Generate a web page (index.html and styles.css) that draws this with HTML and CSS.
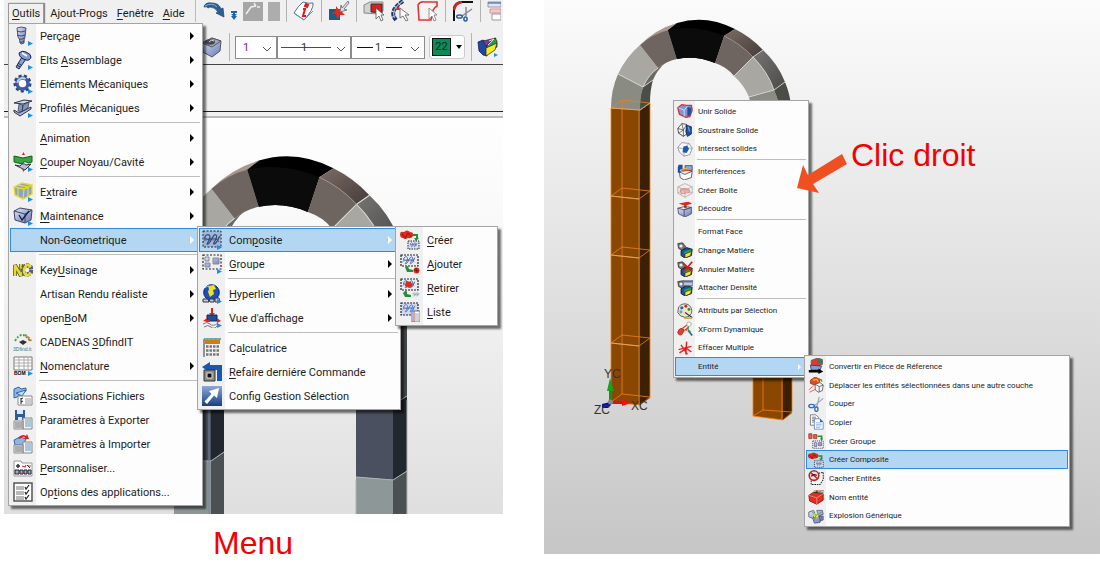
FILE: index.html
```html
<!DOCTYPE html>
<html lang="fr">
<head>
<meta charset="utf-8">
<title>Composite - Menu / Clic droit</title>
<link rel="stylesheet" href="styles.css">
</head>
<body>
<svg class="defs" aria-hidden="true">
<defs>
<linearGradient id="steel" x1="0" y1="0" x2="1" y2="1"><stop offset="0" stop-color="#dfe6f7"/><stop offset="1" stop-color="#6478b4"/></linearGradient>
<linearGradient id="navy" x1="0" y1="0" x2="0" y2="1"><stop offset="0" stop-color="#8ea8d8"/><stop offset="1" stop-color="#173f80"/></linearGradient>
<linearGradient id="brown" x1="0" y1="0" x2="1" y2="1"><stop offset="0" stop-color="#7c6c66"/><stop offset="1" stop-color="#443b39"/></linearGradient>
<linearGradient id="grey" x1="0" y1="0" x2="1" y2="1"><stop offset="0" stop-color="#777573"/><stop offset="1" stop-color="#4c4a48"/></linearGradient>

<symbol id="arch" viewBox="600 0 200 120" overflow="visible">
<path d="M640 45Q656 29 677 23L668 30Q652 36 640 45Z" fill="#a8988f"/>
<path d="M640 110Q639 98 643 87L653 80Q650 90 650 103Z" fill="#4b4e47"/>
<path d="M643 87Q648 75 658 68L666 62Q657 70 653 80Z" fill="#6c6a66"/>
<path d="M611 108Q611 90 618 74L643 87Q640 97 640 110Z" fill="#8a8c82"/>
<path d="M618 74Q626 57 640 45L658 68Q648 76 643 87Z" fill="#a9a7a1"/>
<path d="M640 45Q653 34 668 30L677 59Q667 61 658 68Z" fill="#6f6560"/>
<path d="M668 30L677 23Q706 14 735 29L724 36L715 63Q696 55 677 59Z" fill="#000"/>
<path d="M668 30Q696 24 724 36L715 63Q696 55 677 59Z" fill="#0b0b0b"/>
<path d="M724 36Q741 44 753 57L734 76Q727 67 715 63Z" fill="#6f6560"/>
<path d="M724 36L735 29Q751 37 763 50L753 57Q741 44 724 36Z" fill="url(#brown)"/>
<path d="M753 57Q768 72 774 90L749 97Q744 85 734 76Z" fill="#a9a7a1"/>
<path d="M753 57L763 50Q778 64 785 82L774 90Q768 72 753 57Z" fill="url(#grey)"/>
<path d="M774 90Q779 101 780 112L751 112Q751 104 749 97Z" fill="#8a8c82"/>
<path d="M774 90L785 82Q790 94 791 106L780 112Q779 101 774 90Z" fill="#4a4d45"/>
<path d="M618 74L643 87L653 80M643 87Q648 75 658 68M753 57L763 50M753 57Q768 72 774 90L785 82M749 97L774 90M734 76L753 57" fill="none" stroke="#dddbd6" stroke-width=".8"/>
<path d="M724 36Q741 44 753 57" fill="none" stroke="#a08f86" stroke-width=".7"/>
</symbol>

<symbol id="go" viewBox="0 0 20 20"><path d="M15 15v5l5-2.500z" fill="#1b8fe0"/></symbol>
<symbol id="knot" viewBox="0 0 20 20"><path d="M3 9C2 3 8 2 8 6S3 14 6 13s5-11 8-9-4 9-2 9 6-7 5-8" fill="none" stroke="currentColor" stroke-width="1.200"/><path d="M1 11C5 5 15 13 18 5M2 6c4 6 10-4 15 5" fill="none" stroke="currentColor" stroke-width=".8"/></symbol>

<symbol id="i-drill" viewBox="0 0 20 20"><path d="M4 2q4-2 9 0l-1 9q-1 2-1 6-3 2-4 0 0-4-2-6z" fill="url(#steel)" stroke="#334" stroke-width=".8"/><path d="M4 5q4 2 8 0M4 9q4 2 8 0M6 13q3 1 5-1M7 16q2 1 4-1" fill="none" stroke="#28304e" stroke-width=".8"/><use href="#go"/></symbol>
<symbol id="i-bolt" viewBox="0 0 20 20"><path d="M9 7L3 17l3 2L13 9z" fill="#8aa0d0" stroke="#1d2b55"/><path d="M5 13l3 2M4 15l3 2" stroke="#1d2b55"/><path d="M6 3q3-3 7-1 5 2 5 5-1 4-5 3Q6 8 6 3z" fill="#7f9ad2" stroke="#14224c"/><path d="M9 3l5 3" stroke="#fff" stroke-width="1.500"/><use href="#go"/></symbol>
<symbol id="i-gear" viewBox="0 0 20 20"><circle cx="9.500" cy="9.500" r="7.500" fill="none" stroke="#2f4270" stroke-width="3" stroke-dasharray="3 2.200"/><circle cx="9.500" cy="9.500" r="5.500" fill="#fff" stroke="#3c5ca0" stroke-width="3.500"/><path d="M4.500 9a5 5 0 0 1 8-4" fill="none" stroke="#bccbea" stroke-width="2"/><use href="#go"/></symbol>
<symbol id="i-beam" viewBox="0 0 20 20"><path d="M1 5L11 2l8 1-9 3z" fill="#cbd6ef" stroke="#334"/><path d="M6 6l4 1-1 7-4-1zM10 7l6-3-1 6-6 4z" fill="#7f95c8" stroke="#334" stroke-width=".7"/><path d="M1 12l5 3 12-6v2L7 18l-6-4z" fill="#a4b4dc" stroke="#334"/><use href="#go"/></symbol>
<symbol id="i-cavity" viewBox="0 0 20 20"><path d="M1 4l9 2 9-2v6l-4 1q-4-3-6 1L1 10z" fill="#35a73f" stroke="#155c1c"/><path d="M2 13l5 1q3-4 6-1l5-1-6 6z" fill="#b7c0d8" stroke="#334"/><path d="M9 3l1.500-3L12 3zM9 17l1.500 3L12 17z" fill="#d22"/><use href="#go"/></symbol>
<symbol id="i-extract" viewBox="0 0 20 20"><path d="M1 5l8-4 10 2v9l-9 5-8-4z" fill="#8ba0d4"/><path d="M1 5l8-4 10 2-8 4zM11 7l-1 10 9-5V3M1 5l1 8 8 4M5 6v8M5 3l10 2v9" fill="none" stroke="#e8dc20" stroke-width="1.300"/><use href="#go"/></symbol>
<symbol id="i-maint" viewBox="0 0 20 20"><path d="M1 5l6-3 12 2-1 10-6 3-10-3z" fill="url(#steel)" stroke="#446"/><path d="M1 5l11 3 7-4M12 8v9" fill="none" stroke="#446"/><path d="M6 9l3 5 7-9" fill="none" stroke="#102040" stroke-width="1.300"/><use href="#go"/></symbol>
<symbol id="i-nc" viewBox="0 0 20 20"><path d="M2 16V5l6 11V4" fill="none" stroke="#555" stroke-width="4"/><path d="M2 16V5l6 11V4" fill="none" stroke="#e9dc24" stroke-width="2.500"/><circle cx="14" cy="10" r="4.500" fill="none" stroke="#55607c" stroke-width="4.500" stroke-dasharray="3 1"/><path d="M18 7q-4-4-6 0t0 7 6-1" fill="none" stroke="#e9dc24" stroke-width="2.500"/></symbol>
<symbol id="i-cadenas" viewBox="0 0 20 20"><path d="M2 9q7-12 15 0" fill="none" stroke="#3aa85a" stroke-width="2" stroke-dasharray="2 1.500"/><path d="M12 3q4 2 6 6" fill="none" stroke="#e0701d" stroke-width="2" stroke-dasharray="2 1.500"/><path d="M6 10l4-2 4 2-4 3z" fill="#333"/><text x="0" y="18.500" class="tiny teal">3Dfind.it</text></symbol>
<symbol id="i-bom" viewBox="0 0 20 20"><path d="M1 1h18v13H1z" fill="#fff" stroke="#777"/><path d="M1 4h18M1 7h18M1 10h18M6 1v13M11 1v13M15 1v13" stroke="#aaa"/><text x="1" y="19" class="tiny heavy">BOM</text><use href="#go"/></symbol>
<symbol id="i-assoc" viewBox="0 0 20 20"><path d="M1 3l5-2 2 2 5-1v3l-9 6-3 1z" fill="#8fb5e2" stroke="#3468a8"/><path d="M3 7l10-3-4 6z" fill="#c7def5" stroke="#3468a8"/><path d="M5 10h14v9H5z" fill="#fff" stroke="#888"/><path d="M8 12v6M8 13l2-1M8 16l2-1" stroke="#222"/><path d="M12 13h6M12 15h6M12 17h6" stroke="#999"/></symbol>
<symbol id="i-export" viewBox="0 0 20 20"><path d="M2 0h10v10H2z" fill="#2b5a9e"/><path d="M4 0h6v4H4zM5 7h4v3H5z" fill="#dce8f6"/><path d="M1 11h9v8H1zM10 8h9v11h-9z" fill="#f4f4f4" stroke="#888"/><path d="M2 13h7M2 15h7M2 17h7" stroke="#666"/><path d="M12 10h6M12 12h6M12 14h6M12 16h6" stroke="#69b"/></symbol>
<symbol id="i-import" viewBox="0 0 20 20"><path d="M1 6l6-3 6 2-3 6H2z" fill="#8fb5e2" stroke="#3468a8"/><path d="M5 4q4-5 8-2l1-2 2 5-5 0 1-2q-3-1-5 2z" fill="#d22"/><path d="M1 11h9v8H1zM10 8h9v11h-9z" fill="#f4f4f4" stroke="#888"/><path d="M2 13h7M2 15h7M2 17h7" stroke="#666"/><path d="M12 10h6M12 12h6M12 14h6M12 16h6" stroke="#69b"/></symbol>
<symbol id="i-custom" viewBox="0 0 20 20"><path d="M1 3h7l1 2h10v13H1z" fill="#fff" stroke="#999"/><path d="M3 8h4M5 6v4" stroke="#334" stroke-width="1.500"/><path d="M9 8l3 1 1-2M15 8h3" stroke="#e33" stroke-width="1.200" fill="none"/><path d="M14 7l3 3" stroke="#223"/><path d="M2 12h4v4H2zM7 12h3v4H7zM11 12h3v4h-3zM15 12h3v4h-3z" fill="#aab" stroke="#223"/></symbol>
<symbol id="i-options" viewBox="0 0 20 20"><path d="M1 1h18v18H1z" fill="#fdfdfd" stroke="#555" stroke-width="1.500"/><path d="M3 5h8M3 7h8M3 10h8M3 12h8M3 15h8M3 17h8" stroke="#777"/><path d="M12 5l1 2 3-4M12 10l1 2 3-4M12 15l1 2 3-4" fill="none" stroke="#222" stroke-width="1.200"/></symbol>

<symbol id="i-composite" viewBox="0 0 20 20"><path d="M1 1h18v16H1z" fill="#9fb6d6" stroke="#223" stroke-dasharray="2 1.500"/><g color="#33497a"><use href="#knot" y="1"/></g><use href="#go"/></symbol>
<symbol id="i-group" viewBox="0 0 20 20"><path d="M1 1h18v14H1z" fill="none" stroke="#222" stroke-width="1.200" stroke-dasharray="2 1.500"/><path d="M3 3h4v4H3zM3 9h5v4H3zM11 4h6v6h-6z" fill="url(#steel)" stroke="#889"/><use href="#go"/></symbol>
<symbol id="i-globe" viewBox="0 0 20 20"><circle cx="9.500" cy="8.500" r="7.800" fill="#1b4fc0" stroke="#0a2360"/><path d="M6 2l6-1 2 4-3 1 1 4-4 3-2-5 1-3z" fill="#f2e020"/><path d="M3 4q2-2 4-2" stroke="#9cc4ff" fill="none"/><path d="M1 15h5l1 3H1zM7 15h5v3H8zM13 14h4l1 4h-5z" fill="#c8ccd8" stroke="#334"/><use href="#go"/></symbol>
<symbol id="i-view" viewBox="0 0 20 20"><path d="M9 0h2v5h2l-3 3-3-3h2z" fill="#d22"/><path d="M5 7h10v6H5z" fill="#1c4f9c" stroke="#0d2a60"/><path d="M1 13l4-3v2h3v2H5zM19 13l-4-3v5z" fill="#e2241c"/><path d="M1 16q4-3 7 0t8-1M2 19q4-3 7 0t6-1" fill="none" stroke="#777"/><use href="#go"/></symbol>
<symbol id="i-calc" viewBox="0 0 20 20"><path d="M1 1h18v18H1z" fill="#f2f2f2"/><path d="M2 19V1h17" stroke="#333" fill="none"/><path d="M3 2h15v4H3z" fill="#d77a12"/><path d="M2 1h17" stroke="#3fd0d8" stroke-dasharray="3 1"/><path d="M4 8.500h14M4 12.500h14M4 16.500h14" stroke="#777" stroke-width="2.500" stroke-dasharray="2.500 1"/></symbol>
<symbol id="i-redo" viewBox="0 0 20 20"><path d="M0 5l8-5v3h12v16h-5V8H8v3z" fill="#1858b0"/><path d="M2 8h11v11H2z" fill="#8c8c8c" stroke="#333"/><path d="M5 11h5v5H5z" fill="#111" stroke="#ddd"/></symbol>
<symbol id="i-cursor" viewBox="0 0 20 20"><path d="M0 0h20v20H0z" fill="url(#navy)"/><path d="M17 2l-2 10-3-2.500L5 18l-2.500-2.500L9.500 8 7 5z" fill="#fff"/></symbol>

<symbol id="i-ccreate" viewBox="0 0 20 20"><path d="M0 4q0-3 4-2 3-3 6 0 4 0 3 4-2 3-5 2-3 2-5 0-3 0-3-4z" fill="#dc2a1c"/><path d="M2 4l3 4 3-5 3 4" stroke="#701008" stroke-width=".7" fill="none"/><path d="M13 4h5v4l1 0-3 3-2-3h2V6h-3z" fill="#249038"/><path d="M8 11h11v8H8z" fill="#dde3f2" stroke="#223" stroke-dasharray="1.500 1"/><g color="#3c5488"><use href="#knot" x="8" y="11" width="11" height="9"/></g></symbol>
<symbol id="i-cadd" viewBox="0 0 20 20"><path d="M1 1h17v11H1z" fill="#e8ecf5" stroke="#222" stroke-width="1.200" stroke-dasharray="2 1"/><g color="#445f98"><use href="#knot" width="18" height="15"/></g><path d="M5 13l3-1 1 3 4 1v2H7z" fill="#249038"/><circle cx="16.500" cy="16.500" r="3" fill="#dc2a1c"/><path d="M14 16l5 1M16 14l1 5" stroke="#701008" stroke-width=".7"/></symbol>
<symbol id="i-cremove" viewBox="0 0 20 20"><path d="M1 1h17v11H1z" fill="#e8ecf5" stroke="#222" stroke-width="1.200" stroke-dasharray="2 1"/><g color="#445f98"><use href="#knot" width="18" height="15"/></g><path d="M6 3l5 1 2 4-4 2-4-2z" fill="#dc2a1c"/><path d="M3 15l3-3 1 2v2l4 1v2H5z" fill="#249038"/><g color="#7888a8"><use href="#knot" x="12" y="13" width="8" height="8"/></g></symbol>
<symbol id="i-clist" viewBox="0 0 20 20"><path d="M1 1h17v12H1z" fill="#cfdaee" stroke="#222" stroke-width="1.200" stroke-dasharray="2 1"/><g color="#4b70b4"><use href="#knot" width="18" height="15"/></g><path d="M12 9h8v11h-8z" fill="#fff" stroke="#4878c0"/><path d="M14 9v11" stroke="#d33"/><path d="M15 12h4M15 14h4M15 16h4M15 18h4" stroke="#9ab"/></symbol>

<symbol id="i-union" viewBox="0 0 20 20"><path d="M1 6l5-4 6 1 6 0 1 6-3 8-5 1-8-4z" fill="#7f97d0" stroke="#e02c2c" stroke-width="1.600"/><path d="M2 6l7 3 4-5M9 9v8" stroke="#dfe6f7" fill="none"/><path d="M13 5l5 1-1 9-4 2z" fill="#1f4fa0"/></symbol>
<symbol id="i-subtract" viewBox="0 0 20 20"><path d="M1 8l5-6 6 1v12l-4 3-6-4z" fill="#f4f4f4" stroke="#333"/><path d="M1 8l7 2 4-7M8 10v8M2 14l6-4-2-8" fill="none" stroke="#333" stroke-width=".8"/><path d="M12 4l6 2v9l-5 3-2-6z" fill="#1f4fa0" stroke="#0e2a60"/><path d="M14 6l2 6" stroke="#7fa4e0" stroke-width="1.500"/></symbol>
<symbol id="i-intersect" viewBox="0 0 20 20"><path d="M1 8l5-6 9 1 4 6-3 8-7 2-6-5z" fill="#f7f7f7" stroke="#889"/><path d="M1 8l7 2 7-7M8 10l1 9M10 9l9 0" fill="none" stroke="#99a"/><path d="M8 7l5-1 2 4-3 5-5-1z" fill="#1c58b4"/></symbol>
<symbol id="i-interf" viewBox="0 0 20 20"><path d="M2 1h5v6H4v4H1V4z" fill="#1f4fa0"/><path d="M10 2h9v6h-9z" fill="#8fa8d8" stroke="#446"/><path d="M3 10l6-3 10 2-1 8-9 3-5-3z" fill="#f8f8f8" stroke="#444"/><path d="M6 9l6-1 5 0" stroke="#e84818" stroke-width="1.500"/><path d="M3 10l7 3 9-4" fill="none" stroke="#444"/><path d="M8 6h5" stroke="#f0c020" stroke-width="1.500"/></symbol>
<symbol id="i-box" viewBox="0 0 20 20"><path d="M1 6l9-4 9 4v8l-9 5-9-5z" fill="#fbecec" stroke="#aaa"/><path d="M4 9l5-1 6 1 1 4-6 1-5 1z" fill="#f4b4b4" stroke="#e88080"/><path d="M1 6l9 4 9-4M10 10v9M1 14l9-6 9 6" fill="none" stroke="#aaa"/></symbol>
<symbol id="i-unsew" viewBox="0 0 20 20"><path d="M2 3l12-2 5 2-9 3z" fill="#e02418"/><path d="M9 5h3v4H9z" fill="#d22"/><path d="M1 9l8 2 9-3v8l-8 4-8-4z" fill="url(#steel)" stroke="#446"/><path d="M1 9l8-2 9 1-9 3v8" fill="none" stroke="#446"/></symbol>
<symbol id="i-matter" viewBox="0 0 20 20"><path d="M1 2l6-1 4 5-4 5-5-3z" fill="#777" stroke="#333"/><circle cx="5" cy="5" r="2" fill="#eee"/><path d="M5 11l7-4 7 2-1 8-8 3-5-3z" fill="#1c4fa8" stroke="#111"/><path d="M9 12l9-3-1 4-8 2z" fill="#28a040"/><path d="M10 15l8-3-1 5-7 3z" fill="#f4e820" stroke="#222" stroke-width=".7"/></symbol>
<symbol id="i-cancel" viewBox="0 0 20 20"><use href="#i-matter"/><path d="M8 3l11 10M19 1L8 14" stroke="#e01818" stroke-width="2.200"/></symbol>
<symbol id="i-density" viewBox="0 0 20 20"><use href="#i-matter"/><path d="M8 0h12v7H8z" fill="#b8c4d8" stroke="#667"/><path d="M8 2h12" stroke="#556b98" stroke-width="2"/></symbol>
<symbol id="i-palette" viewBox="0 0 20 20"><path d="M2 5q5-6 12-3 6 4 4 11-2 5-8 5-7-1-9-6z" fill="#ece6b8" stroke="#446"/><circle cx="6" cy="6" r="2" fill="#2a62c4"/><circle cx="11" cy="4" r="1.800" fill="#d22"/><circle cx="15" cy="8" r="1.800" fill="#2a8a40"/><circle cx="5" cy="11" r="2" fill="#58a8e0"/><path d="M10 12l9 6" stroke="#333" stroke-width="1.500"/><path d="M9 19h10" stroke="#c8b050" stroke-width="2"/></symbol>
<symbol id="i-xform" viewBox="0 0 20 20"><path d="M1 14q1-5 6-5l2 3-3 5q-4 2-5-3z" fill="#e04030" stroke="#a01c10"/><path d="M7 9l8-6M9 12l6-5M11 12l3-4" stroke="#e04030" stroke-width="1.500"/><circle cx="15" cy="4" r="2.800" fill="#fff" stroke="#999"/><path d="M14 12l5 6" stroke="#2a58a8" stroke-width="2"/><path d="M14 7v5l3 1" fill="none" stroke="#28a040" stroke-width="1.500"/></symbol>
<symbol id="i-erase" viewBox="0 0 20 20"><path d="M2 12l16-4M5 6l8 12M12 2l-1 16M3 16l8-5M10 9l8 6" stroke="#e02424" stroke-width="1.800"/></symbol>

<symbol id="i-convert" viewBox="0 0 20 20"><path d="M4 3l8-3 6 2v6l-8 3-6-2z" fill="#d83c30" stroke="#555"/><path d="M12 1l6 1v4l-6 1z" fill="#3a7a58"/><path d="M3 9l14 1-2 5H4z" fill="#7fa0d4" stroke="#335"/><path d="M1 15h12v-2l6 4-6 3v-2H1z" fill="#000"/></symbol>
<symbol id="i-move" viewBox="0 0 20 20"><path d="M3 4l6-4 6 3-1 5-6 2-5-2z" fill="#e84820" stroke="#742"/><path d="M6 4l5-1 2 3" stroke="#e8c020" stroke-width="1.500" fill="none"/><path d="M9 9l6-2 4 3-1 7-5 2-4-3z" fill="#f6f6f6" stroke="#555"/><path d="M9 9l5 3 5-2M14 12v7" fill="none" stroke="#555"/><path d="M1 16l6-5M2 19l8-4" stroke="#e04040"/><path d="M14 3q4 0 3 3" fill="none" stroke="#28a040" stroke-width="1.500"/></symbol>
<symbol id="i-cut" viewBox="0 0 20 20"><path d="M19 3L7 13M14 1l-3 13" stroke="#99a6b8" stroke-width="1.500"/><ellipse cx="4.500" cy="12.500" rx="3.500" ry="2" fill="none" stroke="#2c6cc4" stroke-width="1.700"/><ellipse cx="10.500" cy="16.500" rx="2" ry="2.700" fill="none" stroke="#2c6cc4" stroke-width="1.700"/></symbol>
<symbol id="i-copy" viewBox="0 0 20 20"><path d="M3 1h7l3 3v10H3z" fill="#fff" stroke="#666"/><path d="M5 4h5M5 6h6M5 8h6M5 10h4" stroke="#666"/><path d="M8 6h7l4 4v9H8z" fill="#fff" stroke="#5585c8"/><path d="M10 11h7M10 13h7M10 15h7M10 17h5" stroke="#86aee0"/><path d="M15 6l4 4h-4z" fill="#2c5cb0"/></symbol>
<symbol id="i-cgroup" viewBox="0 0 20 20"><path d="M1 1h4v6H1zM7 2h4v5H7z" fill="#e8604c" stroke="#933"/><path d="M12 3h6v4l1 0-2 3-2-3h1V5h-4z" fill="#249038"/><path d="M6 10h13v9H6z" fill="#fff" stroke="#222" stroke-dasharray="1.500 1"/><path d="M8 12h3v5H8zM13 12h4v4h-4z" fill="url(#steel)" stroke="#668"/></symbol>
<symbol id="i-hide" viewBox="0 0 20 20"><path d="M4 10v8h11l4-6V3l-6 1" fill="#fff" stroke="#222" stroke-width="1.300" stroke-dasharray="2 1"/><circle cx="7.500" cy="7" r="6" fill="#f4e0e0" stroke="#c82020" stroke-width="2"/><path d="M3 3l9 8" stroke="#c82020" stroke-width="1.800"/><path d="M4 8q3-4 7-1" stroke="#223" fill="none" stroke-width="1.500"/></symbol>
<symbol id="i-name" viewBox="0 0 20 20"><path d="M1 8l6-4 12 2v8l-8 5-9-4z" fill="#e03022" stroke="#7c1208"/><path d="M1 8l10 3 8-5M11 11v8" fill="none" stroke="#f49088"/><text x="7" y="5" class="tiny">JAM25</text></symbol>
<symbol id="i-explode" viewBox="0 0 20 20"><path d="M1 5l6-2 2 4-3 6-5-2zM11 3h7l1 5-6 2zM6 13l5-3 6 1-2 7-7 1zM14 10l5 0v5l-4 1z" fill="url(#steel)" stroke="#557"/><circle cx="10" cy="9" r="3" fill="#f4ec20"/><path d="M10 9L4 4M10 9l7-4M10 9l-2 7" stroke="#4a9a60"/></symbol>

<symbol id="t-undo" viewBox="0 0 22 22"><path d="M1 7q1-5 8-4 7 0 9 6l2-1 1 9-8-4 2-1q-3-5-8-5l-2 1q-1-2-4-1z" fill="#2c6092" stroke="#1b3f66" stroke-width=".7"/><path d="M2 6q7-4 12 1" stroke="#8ab4da" fill="none"/></symbol>
<symbol id="t-down" viewBox="0 0 8 22"><path d="M1 11h6v2H5v1h2l-3 3-3-3h2v-1H1zM1 16h6l-3 4z" fill="#1e66a8"/></symbol>
<symbol id="t-wand" viewBox="0 0 20 22"><path d="M0 2h20v19H0z" fill="#a6a6a6"/><path d="M3 14l5-7 5-1M14 7h3M11 3l2 3" stroke="#eee" fill="none" stroke-width="1.500"/></symbol>
<symbol id="t-blank" viewBox="0 0 12 22"><path d="M0 2h12v19H0z" fill="#adadad"/></symbol>
<symbol id="t-info" viewBox="0 0 22 22"><path d="M10 2q6 2 10 1 1 6-9 17L1 13Q5 6 10 2z" fill="#fff" stroke="#4c74a8"/><path d="M2 14l9 6 9-9" fill="none" stroke="#65a08c"/><path d="M13 4l2 1-1 2-2-1zM10 9h2l-2 7h3" stroke="#e01818" stroke-width="2" fill="none"/></symbol>
<symbol id="t-hit" viewBox="0 0 22 22"><path d="M1 9h11v11H1z" fill="#1e5c88"/><path d="M8 6l3 4 4-2-1 4 3 3-5 0-3 4-1-5-4-1 4-2z" fill="#e4281c"/><path d="M20 1l-6 7-1-3-1 7 7-2-3-1 5-6z" fill="#ddd" stroke="#666" stroke-width=".8"/></symbol>
<symbol id="t-face" viewBox="0 0 22 22"><path d="M1 5l6-3h13v9l-5 3-14-1z" fill="#d2d2d2" stroke="#888"/><path d="M8 4h11v9l-11-1z" fill="#e01c1c" stroke="#333"/><path d="M13 8v11l3-3 2 5 2-1-2-5 3 0z" fill="#fff" stroke="#555" stroke-width=".8"/></symbol>
<symbol id="t-edge" viewBox="0 0 22 22"><path d="M13 1Q-2 11 6 20" fill="none" stroke="#203860" stroke-width="4" stroke-dasharray="4 1"/><path d="M13 1Q0 10 5 18" fill="none" stroke="#94a8d4" stroke-width="1.300"/><path d="M5 10l4-4 1 4z" fill="#e02424"/><path d="M10 8v10l3-2 3 5 2-1-3-5 4 0z" fill="#fff" stroke="#555" stroke-width=".8"/></symbol>
<symbol id="t-region" viewBox="0 0 22 22"><path d="M1 5q2-4 7-3h12v4q-5 2-6 14H2z" fill="#f4f4f4" stroke="#e03434" stroke-width="1.600"/><path d="M12 8v11l3-3 2 5 2-1-2-5 3 0z" fill="#fff" stroke="#777" stroke-width=".8"/></symbol>
<symbol id="t-trim" viewBox="0 0 22 22"><path d="M2 21V8q1-5 7-6h12" fill="none" stroke="#111" stroke-width="2"/><path d="M2 10q1-7 8-8" fill="none" stroke="#e02020" stroke-width="2.500"/><path d="M20 9l-10 7M14 7l0 9" stroke="#889" stroke-width="1.500"/><ellipse cx="7.500" cy="16.500" rx="2.800" ry="1.600" fill="none" stroke="#2c5c9c" stroke-width="1.500"/><ellipse cx="13.500" cy="19" rx="1.600" ry="2" fill="none" stroke="#2c5c9c" stroke-width="1.500"/></symbol>
<symbol id="t-sheets" viewBox="0 0 14 22"><path d="M1 2h13v5H1z" fill="#dfe6f4" stroke="#99a"/><path d="M3 9h11v4H3z" fill="#f8c8c8" stroke="#c99"/><path d="M5 14h9v6H5z" fill="#fff" stroke="#99a"/><path d="M1 3h13" stroke="#335a9c"/></symbol>
<symbol id="t-cube" viewBox="0 0 22 22"><path d="M1 7l10-5 9 3-1 10-8 6-9-5z" fill="url(#steel)" stroke="#556"/><path d="M1 7l10 4 9-6-9-3z" fill="#a0a8b4" stroke="#556"/><ellipse cx="9" cy="6" rx="5" ry="2.700" fill="#45484e"/><path d="M8 6q2-3 5-1" stroke="#ddd" fill="none"/></symbol>
<symbol id="t-colors" viewBox="0 0 22 22"><path d="M1 6l5-2 4 3v13l-4-1-4-4z" fill="#1c48a8" stroke="#113" stroke-width=".7"/><path d="M6 5l13-3-2 6-8 2z" fill="#7a3c9c" stroke="#222" stroke-width=".7"/><path d="M18 2l2 3v6l-10 5V9z" fill="#28a040" stroke="#222" stroke-width=".7"/><path d="M9 12l11-5-2 7-9 6z" fill="#f4ec20" stroke="#222" stroke-width=".7"/><path d="M12 5l5-2-6 6" fill="none" stroke="#ddd"/><path d="M17 17v4l4-2z" fill="#1b8fe0"/></symbol>
</defs>
</svg>

<main class="board">
<figure class="panel panel-menu">
  <div class="app">
    <svg class="scene" viewBox="4 0 499 514" preserveAspectRatio="xMinYMin slice" aria-hidden="true">
      <path d="M174 268h37v194h-37z" fill="#4a505f"/><path d="M211 268h13v184l-13 9z" fill="#22262f"/>
      <path d="M174 458l37 3v53h-37z" fill="#8d9798"/><path d="M211 461l13-9v62h-13z" fill="#4b5152"/>
      <path d="M356 268h37v212l-37-3z" fill="#4a505f"/><path d="M393 268h14v128l-14 9z" fill="#434949"/><path d="M393 405l14-9v75l-14 9z" fill="#22262f"/>
      <path d="M356 477l37 3v34h-37z" fill="#8d9798"/><path d="M393 480l14-9v43h-14z" fill="#4b5152"/>
      <path d="M211 461l13-9M356 477l37 3 14-9M393 405l14-9M356 480v34M203 461h8M407 400v114" stroke="#aab4b6" fill="none"/>
      <path d="M209 410v104" stroke="#76829a"/>
      <g transform="translate(-611 131) scale(1.285)"><use href="#arch" x="600" y="0" width="200" height="120"/></g>
    </svg>
    <header class="chrome">
      <div class="row row-top">
        <nav class="menubar" aria-label="Menus">
          <button class="tab open" type="button"><u>O</u>utils</button>
          <button class="tab" type="button">Ajout-Progs</button>
          <button class="tab" type="button"><u>F</u>enêtre</button>
          <button class="tab" type="button"><u>A</u>ide</button>
        </nav>
        <div class="tools">
          <button type="button" aria-label="Annuler"><svg width="22" height="22"><use href="#t-undo"/></svg></button>
          <button type="button" aria-label="Historique"><svg width="8" height="22"><use href="#t-down"/></svg></button>
          <button type="button" aria-label="Baguette"><svg width="20" height="22"><use href="#t-wand"/></svg></button>
          <button type="button" aria-label="Vide"><svg width="12" height="22"><use href="#t-blank"/></svg></button>
          <i class="bar"></i>
          <button type="button" aria-label="Info"><svg width="22" height="22"><use href="#t-info"/></svg></button>
          <i class="bar"></i>
          <button type="button" aria-label="Point"><svg width="22" height="22"><use href="#t-hit"/></svg></button>
          <i class="bar"></i>
          <button type="button" aria-label="Face"><svg width="22" height="22"><use href="#t-face"/></svg></button>
          <button type="button" aria-label="Arête"><svg width="22" height="22"><use href="#t-edge"/></svg></button>
          <button type="button" aria-label="Région"><svg width="22" height="22"><use href="#t-region"/></svg></button>
          <i class="bar"></i>
          <button type="button" aria-label="Ajuster"><svg width="22" height="22"><use href="#t-trim"/></svg></button>
          <i class="bar"></i>
          <button type="button" aria-label="Feuilles"><svg width="14" height="22"><use href="#t-sheets"/></svg></button>
        </div>
      </div>
      <div class="row row-format">
        <button type="button" aria-label="Solide"><svg width="22" height="22"><use href="#t-cube"/></svg></button>
        <i class="bar"></i>
        <div class="combos">
          <label class="combo layer"><select aria-label="Calque"><option>1</option></select><svg width="8" height="6"><path d="M0 1l4 4 4-4" fill="none" stroke="#555"/></svg></label>
          <label class="combo red-line"><select aria-label="Style de ligne"><option>1</option></select><svg width="8" height="6"><path d="M0 1l4 4 4-4" fill="none" stroke="#555"/></svg></label>
          <label class="combo weight"><select aria-label="Épaisseur"><option>1</option></select><svg width="8" height="6"><path d="M0 1l4 4 4-4" fill="none" stroke="#555"/></svg></label>
        </div>
        <button class="swatch" type="button" aria-label="Couleur 22"><span>22</span><svg width="6" height="4"><path d="M0 0h6l-3 4z"/></svg></button>
        <i class="bar"></i>
        <button type="button" aria-label="Matière"><svg width="22" height="22"><use href="#t-colors"/></svg></button>
      </div>
      <div class="blank"></div>
    </header>

    <ul class="menu menu-tools">
      <li><button type="button"><svg><use href="#i-drill"/></svg>Perçage<b></b></button></li>
      <li><button type="button"><svg><use href="#i-bolt"/></svg><span>Elts <u>A</u>ssemblage</span><b></b></button></li>
      <li><button type="button"><svg><use href="#i-gear"/></svg><span>Eléments M<u>é</u>caniques</span><b></b></button></li>
      <li><button type="button"><svg><use href="#i-beam"/></svg><span>Profilés Mécani<u>q</u>ues</span><b></b></button></li>
      <li class="sep"></li>
      <li><button type="button"><svg></svg><span><u>A</u>nimation</span><b></b></button></li>
      <li><button type="button"><svg><use href="#i-cavity"/></svg><span><u>C</u>ouper Noyau/Cavité</span><b></b></button></li>
      <li class="sep"></li>
      <li><button type="button"><svg><use href="#i-extract"/></svg><span>E<u>x</u>traire</span><b></b></button></li>
      <li><button type="button"><svg><use href="#i-maint"/></svg><span><u>M</u>aintenance</span><b></b></button></li>
      <li><button class="on" type="button"><svg></svg><span>Non-Geometrique</span><b></b></button></li>
      <li class="sep"></li>
      <li><button type="button"><svg><use href="#i-nc"/></svg><span>Key<u>U</u>sinage</span><b></b></button></li>
      <li><button type="button"><svg></svg><span>Artisan Rendu réaliste</span><b></b></button></li>
      <li><button type="button"><svg></svg><span>open<u>B</u>oM</span><b></b></button></li>
      <li><button type="button"><svg><use href="#i-cadenas"/></svg><span>CADENAS <u>3</u>DfindIT</span></button></li>
      <li><button type="button"><svg><use href="#i-bom"/></svg><span><u>N</u>omenclature</span><b></b></button></li>
      <li class="sep"></li>
      <li><button type="button"><svg><use href="#i-assoc"/></svg><span><u>A</u>ssociations Fichiers</span></button></li>
      <li><button type="button"><svg><use href="#i-export"/></svg><span>Paramètres à Exporter</span></button></li>
      <li><button type="button"><svg><use href="#i-import"/></svg><span>Paramètres à Importer</span></button></li>
      <li><button type="button"><svg><use href="#i-custom"/></svg><span><u>P</u>ersonnaliser...</span></button></li>
      <li><button type="button"><svg><use href="#i-options"/></svg><span>Op<u>t</u>ions des applications...</span></button></li>
    </ul>
    <ul class="menu menu-nongeo">
      <li><button class="on" type="button"><svg><use href="#i-composite"/></svg><span>Com<u>p</u>osite</span><b></b></button></li>
      <li><button type="button"><svg><use href="#i-group"/></svg><span><u>G</u>roupe</span><b></b></button></li>
      <li class="sep"></li>
      <li><button type="button"><svg><use href="#i-globe"/></svg><span><u>H</u>yperlien</span><b></b></button></li>
      <li><button type="button"><svg><use href="#i-view"/></svg><span>Vue d'affichage</span><b></b></button></li>
      <li class="sep"></li>
      <li><button type="button"><svg><use href="#i-calc"/></svg><span>Ca<u>l</u>culatrice</span></button></li>
      <li><button type="button"><svg><use href="#i-redo"/></svg><span><u>R</u>efaire derniére Commande</span></button></li>
      <li><button type="button"><svg><use href="#i-cursor"/></svg><span>Config Gestion Sélection</span></button></li>
    </ul>
    <ul class="menu menu-composite">
      <li><button type="button"><svg><use href="#i-ccreate"/></svg><span><u>C</u>réer</span></button></li>
      <li><button type="button"><svg><use href="#i-cadd"/></svg><span><u>A</u>jouter</span></button></li>
      <li><button type="button"><svg><use href="#i-cremove"/></svg><span><u>R</u>etirer</span></button></li>
      <li><button type="button"><svg><use href="#i-clist"/></svg><span><u>L</u>iste</span></button></li>
    </ul>
  </div>
  <figcaption class="label">Menu</figcaption>
</figure>

<figure class="panel panel-context">
  <div class="viewport">
    <svg class="scene" viewBox="544 0 556 554" preserveAspectRatio="xMinYMin slice" aria-hidden="true">
      <use href="#arch" x="600" y="0" width="200" height="120"/>
      <path d="M611 108l29 2v295l-29-3z" fill="#8a4702"/><path d="M640 110l10-7v295l-10 7z" fill="#3d1f02"/>
      <path d="M753 370h30v50l-30-4z" fill="#8a4702"/><path d="M783 370h9v43l-9 7z" fill="#3d1f02"/>
      <g fill="none" stroke="#f08010" stroke-width=".8">
        <path d="M611 108v294M622 100v294M650 103v295"/><path d="M639 110v295" stroke="#c88848"/>
        <path d="M611 108l11-8 28 3-10 7zM611 196l11-8 28 3-11 8zM611 255l11-8 28 3-11 8zM611 343l11-8 28 3-11 8zM611 402l11-8 28 3-10 8z"/>
        <path d="M753 370v46l30 4 9-8v-42M763 370v40l29 2M753 416l10-6M782 370v50"/>
      </g>
      <path d="M611 108l29 2 10-7M611 196l28 3M611 255l28 3M611 343l28 3" fill="none" stroke="#dca468"/>
      <path d="M609 388h3v14h-3z" fill="#159018"/><path d="M607 391l3-13 4 13z" fill="#19a01c"/>
      <path d="M612 401h12v3h-12z" fill="#e01010"/><path d="M622 399l9 4-9 3z" fill="#f01010"/>
      <path d="M602 404l8-2 1 3-3 3h-6z" fill="#0b10a0"/><circle cx="610.500" cy="402" r="2.500" fill="#888"/>
      <text class="axis" x="604" y="378">YC</text><text class="axis" x="631" y="410">XC</text><text class="axis" x="594" y="414">ZC</text>
    </svg>
    <ul class="menu small menu-solid">
      <li><button type="button"><svg><use href="#i-union"/></svg>Unir Solide</button></li>
      <li><button type="button"><svg><use href="#i-subtract"/></svg>Soustraire Solide</button></li>
      <li><button type="button"><svg><use href="#i-intersect"/></svg>Intersect solides</button></li>
      <li class="sep"></li>
      <li><button type="button"><svg><use href="#i-interf"/></svg>Interférences</button></li>
      <li><button type="button"><svg><use href="#i-box"/></svg>Créer Boite</button></li>
      <li><button type="button"><svg><use href="#i-unsew"/></svg>Découdre</button></li>
      <li class="sep"></li>
      <li><button type="button"><svg></svg>Format Face</button></li>
      <li><button type="button"><svg><use href="#i-matter"/></svg>Change Matiére</button></li>
      <li><button type="button"><svg><use href="#i-cancel"/></svg>Annuler Matière</button></li>
      <li><button type="button"><svg><use href="#i-density"/></svg>Attacher Densité</button></li>
      <li class="sep"></li>
      <li><button type="button"><svg><use href="#i-palette"/></svg>Attributs par Sélection</button></li>
      <li><button type="button"><svg><use href="#i-xform"/></svg>XForm Dynamique</button></li>
      <li><button type="button"><svg><use href="#i-erase"/></svg>Effacer Multiple</button></li>
      <li><button class="on" type="button"><svg></svg>Entité<b></b></button></li>
    </ul>
    <ul class="menu small menu-entity">
      <li><button type="button"><svg><use href="#i-convert"/></svg>Convertir en Piéce de Réference</button></li>
      <li><button type="button"><svg><use href="#i-move"/></svg>Déplacer les entités sélectionnées dans une autre couche</button></li>
      <li><button type="button"><svg><use href="#i-cut"/></svg>Couper</button></li>
      <li><button type="button"><svg><use href="#i-copy"/></svg>Copier</button></li>
      <li><button type="button"><svg><use href="#i-cgroup"/></svg>Créer Groupe</button></li>
      <li><button class="on" type="button"><svg><use href="#i-ccreate"/></svg>Créer Composite</button></li>
      <li><button type="button"><svg><use href="#i-hide"/></svg>Cacher Entités</button></li>
      <li><button type="button"><svg><use href="#i-name"/></svg>Nom entité</button></li>
      <li><button type="button"><svg><use href="#i-explode"/></svg>Explosion Générique</button></li>
    </ul>
    <svg class="pointer" width="52" height="40" viewBox="796 154 52 40" aria-hidden="true"><path d="M842 154l5 10-34 20 6 9-22-5 6-23 5 10z" fill="#ee5022"/></svg>
    <figcaption class="label label-context">Clic droit</figcaption>
  </div>
</figure>
</main>
</body>
</html>
```
FILE: styles.css
```css
* { box-sizing: border-box; }

body {
  margin: 0;
  background: #fff;
  color: #1c1c1c;
  font-family: Roboto, "Open Sans", sans-serif;
  font-size: 11px;
}

button {
  display: flex;
  align-items: center;
  padding: 0;
  border: 0;
  background: none;
  color: inherit;
  font: inherit;
  white-space: nowrap;
}

u { text-decoration: underline; text-underline-offset: 2px; }

.defs { position: absolute; width: 0; height: 0; }

.tiny { font: 5px "Liberation Sans", sans-serif; }
.tiny.teal { fill: #1a7f8c; }
.tiny.heavy { font-weight: bold; }
.axis { font: 12px "Liberation Sans", sans-serif; fill: #333; }

.board {
  display: grid;
  grid-template-columns: minmax(0, 499fr) minmax(0, 556fr);
  align-items: start;
  gap: 41px;
  padding-left: 4px;
}

.panel { margin: 0; }

.app,
.viewport { position: relative; overflow: hidden; }

.app {
  min-height: 514px;
  background: linear-gradient(#fff 20%, #fafafa 40%, #dfdfdf);
}

.viewport {
  min-height: 554px;
  background: linear-gradient(#fbfbfb, #ececec 30%, #c6c6c6);
}

.scene {
  position: absolute;
  inset: 0;
  width: 100%;
  height: 100%;
}

/* Application bars */
.chrome {
  position: relative;
  overflow: hidden;
  border-bottom: 2px solid #bbb;
  background: #f0f0f0;
}

.row { display: flex; align-items: center; }

.row-top { height: 26px; align-items: flex-start; }

.menubar {
  display: flex;
  flex: none;
  align-items: flex-start;
  width: 191px;
  padding: 3px 0 0 4px;
}

.tab { height: 20px; padding: 0 5px 0 4px; }

.tab.open {
  margin-right: 2px;
  padding: 0 3px;
  border: 1px solid #999;
  border-bottom: 0;
  box-shadow: 1px 0 1px #888;
}

.tools {
  display: flex;
  gap: 5px;
  height: 22px;
  padding-left: 7px;
  border-left: 1px solid #bbb;
}

.tools button { flex: none; }
.bar { flex: none; width: 1px; height: 22px; background: #b4b4b4; }
.tools .bar { margin: 0 1px; }
.row-format .bar { height: 28px; margin: 0 1px 0 2px; }

.row-format {
  gap: 4px;
  height: 38px;
  padding: 4px 0 0 197px;
}

.row-format button { flex: none; }

.combos { display: flex; flex: none; }

.combo {
  position: relative;
  display: flex;
  width: 74px;
  height: 23px;
  border: 1px solid #8c8c8c;
  background: #fff;
}

.combo.layer { width: 42px; }

.combo select {
  width: 100%;
  padding: 0 20px 0 0;
  border: 0;
  appearance: none;
  background: none;
  color: #333;
  font: inherit;
  text-align: center;
  text-align-last: center;
}

.combo.layer select { color: #7a1c90; }
.combo svg { position: absolute; right: 5px; top: 9px; }

.combo.red-line select {
  background: linear-gradient(#f00, #f00) 3px 10px / 50px 1px no-repeat;
}

.combo.weight select {
  background:
    linear-gradient(#111, #111) 5px 10px / 16px 1px no-repeat,
    linear-gradient(#111, #111) 34px 10px / 16px 1px no-repeat;
}

.swatch {
  gap: 5px;
  height: 24px;
  padding: 0 2px;
  border: 1px solid #ccc;
  border-radius: 3px;
  background: #fff;
}

.swatch span {
  width: 19px;
  height: 18px;
  border: 1px solid #111;
  background: #0c8a58;
  color: #0a2a1a;
  line-height: 16px;
}

.blank {
  height: 48px;
  margin-bottom: 4px;
  border-top: 1px solid #444;
  border-bottom: 1px solid #222;
}

/* Menus */
.menu {
  position: absolute;
  display: flex;
  flex-direction: column;
  margin: 0;
  padding: 1px;
  border: 1px solid #a4a4a4;
  background: linear-gradient(90deg, #f0f0f0 27px, #fdfdfd 27px);
  box-shadow: 3px 3px 2px rgba(0, 0, 0, .55);
  list-style: none;
}

.menu li { display: flex; flex: 1; }

.menu button {
  flex: 1;
  min-height: 24px;
  gap: 7px;
  padding: 0 6px 0 2px;
  border: 1px solid transparent;
  text-align: left;
}

.menu button svg { flex: none; width: 20px; height: 20px; }
.menu button.on { border-color: #2a8dde; background: #b3d7f3; }

.menu b {
  width: 0;
  margin-left: auto;
  border: 4px solid transparent;
  border-right: 0;
  border-left-color: #000;
}

.menu .on b { border-left-color: #fff; }

.menu .sep {
  flex: none;
  height: 6px;
  padding: 2px 1px 0 29px;
}

.menu .sep::before { content: ""; flex: 1; height: 1px; background: #bdbdbd; }

.menu-tools { left: 4px; top: 23px; width: 195px; padding-top: 0; }
.menu-nongeo { left: 193px; top: 226px; width: 204px; }
.menu-composite { left: 391px; top: 226px; width: 103px; }

.menu.small {
  background: linear-gradient(90deg, #f0f0f0 21px, #fdfdfd 21px);
  font-size: 8px;
}

.menu.small button { min-height: 18px; gap: 5px; padding: 0 5px 0 1px; }
.menu.small button svg { width: 16px; height: 16px; }
.menu.small .sep { height: 4px; padding: 1px 1px 0 22px; }
.menu.small b { border-width: 3px; border-right-width: 0; }

.menu-solid { left: 129px; top: 100px; width: 136px; min-height: 278px; }
.menu-entity { left: 260px; top: 355px; width: 266px; min-height: 172px; }

/* Annotations */
.label {
  color: #f40000;
  font: 32px/36px "Liberation Sans", sans-serif;
}

.panel-menu > .label { padding: 11px 0 0 209px; }
.pointer { position: absolute; left: 252px; top: 154px; }
.label-context { position: absolute; left: 307px; top: 137px; }
```
